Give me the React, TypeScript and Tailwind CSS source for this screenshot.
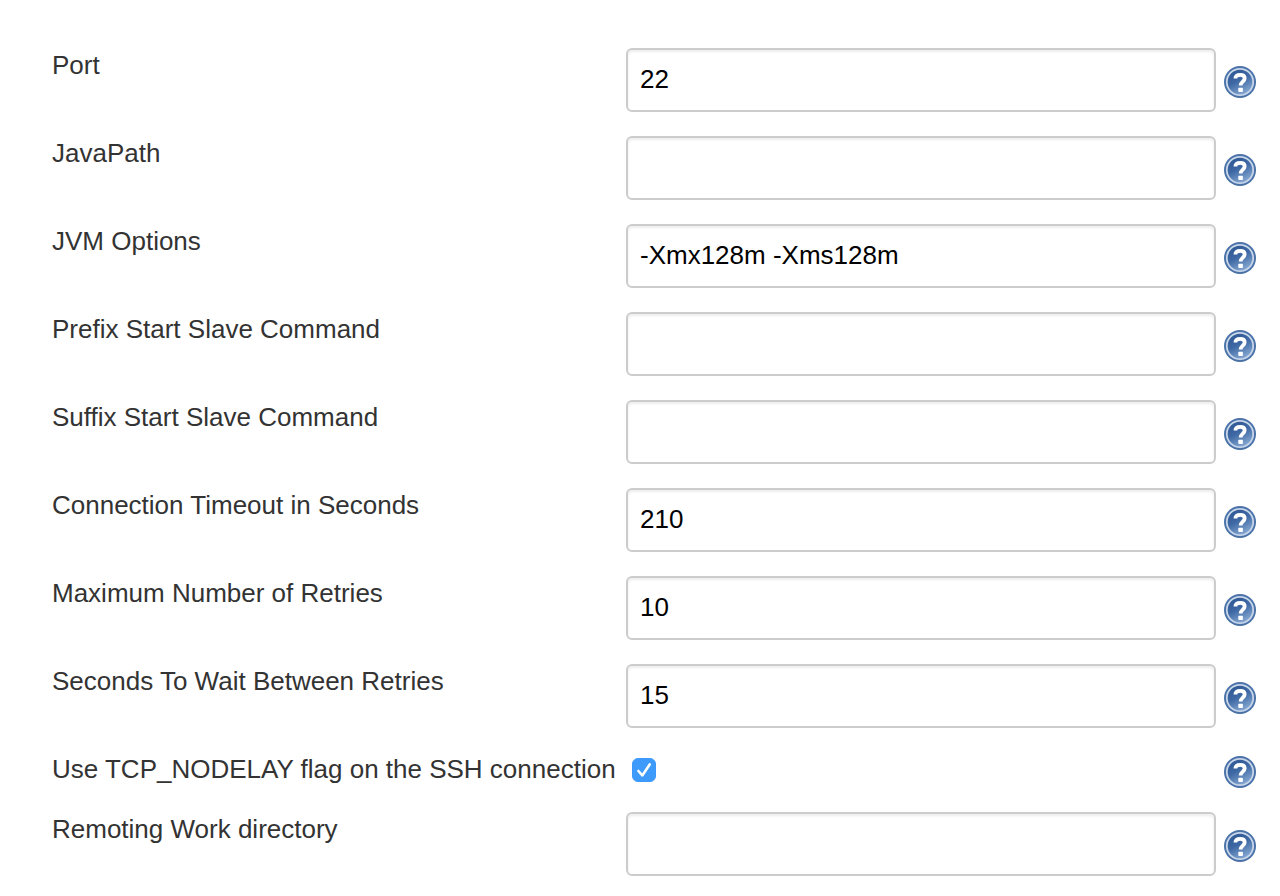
import { useState } from "react";

type Field = {
  id: string;
  label: string;
  kind: "text" | "checkbox";
  value?: string;
};

const fields: Field[] = [
  { id: "port", label: "Port", kind: "text", value: "22" },
  { id: "javaPath", label: "JavaPath", kind: "text" },
  { id: "jvmOptions", label: "JVM Options", kind: "text", value: "-Xmx128m -Xms128m" },
  { id: "prefix", label: "Prefix Start Slave Command", kind: "text" },
  { id: "suffix", label: "Suffix Start Slave Command", kind: "text" },
  { id: "timeout", label: "Connection Timeout in Seconds", kind: "text", value: "210" },
  { id: "retries", label: "Maximum Number of Retries", kind: "text", value: "10" },
  { id: "wait", label: "Seconds To Wait Between Retries", kind: "text", value: "15" },
  { id: "tcpNoDelay", label: "Use TCP_NODELAY flag on the SSH connection", kind: "checkbox" },
  { id: "workDir", label: "Remoting Work directory", kind: "text" },
];

function HelpIcon() {
  return (
    <svg viewBox="0 0 32 32" className="block size-8" aria-hidden="true">
      <defs>
        <linearGradient id="help-fill" x1="0.1" y1="0" x2="0.6" y2="1">
          <stop offset="0" stopColor="#2b5490" />
          <stop offset="0.5" stopColor="#3f69a5" />
          <stop offset="1" stopColor="#86a8d2" />
        </linearGradient>
      </defs>
      <circle cx="16" cy="16" r="16" fill="#4a72a9" />
      <circle cx="16" cy="16" r="13.2" fill="url(#help-fill)" stroke="#c6d5e8" strokeWidth="1.8" />
      <path
        d="M11.4 12.6C11.4 9.6 13.4 8.9 16.2 8.9C19.2 8.9 20.7 10.2 20.7 12.3C20.7 15.7 16.6 15.6 16.6 19.6"
        fill="none"
        stroke="#fff"
        strokeWidth="3.8"
      />
      <rect x="14.3" y="21.8" width="4.6" height="4.2" rx="0.8" fill="#fff" />
    </svg>
  );
}

function Row({ field }: { field: Field }) {
  const [text, setText] = useState(field.value ?? "");
  const [checked, setChecked] = useState(true);
  const isText = field.kind === "text";

  return (
    <div className="grid grid-cols-[574px_minmax(0,1fr)_40px] items-start">
      <label htmlFor={field.id} className="leading-[34px] whitespace-nowrap text-[#333]">
        {field.label}
      </label>
      {isText ? (
        <input
          id={field.id}
          type="text"
          value={text}
          onChange={(e) => setText(e.target.value)}
          className="h-16 w-full min-w-0 rounded-md border-2 border-[#ccc] bg-white px-3 pb-0.5 text-black shadow-[inset_0_2px_3px_rgba(0,0,0,0.075)] outline-none focus:border-[#66afe9]"
        />
      ) : (
        <span className="grid w-fit py-1.5 pl-1.5">
          <input
            id={field.id}
            type="checkbox"
            checked={checked}
            onChange={(e) => setChecked(e.target.checked)}
            className="peer col-start-1 row-start-1 size-6 appearance-none rounded-md border border-[#aaa] bg-white checked:border-[#3b99fc] checked:bg-[#3e9afb]"
          />
          <svg
            viewBox="0 0 24 24"
            aria-hidden="true"
            className="pointer-events-none invisible col-start-1 row-start-1 size-6 peer-checked:visible"
          >
            <path
              d="M6.4 13L10.3 17.4L17.7 6.4"
              fill="none"
              stroke="#fff"
              strokeWidth="2.6"
              strokeLinecap="round"
              strokeLinejoin="round"
            />
          </svg>
        </span>
      )}
      <button
        type="button"
        aria-label={`Help for ${field.label}`}
        className={isText ? "mt-[18px] cursor-pointer justify-self-end" : "mt-1 cursor-pointer justify-self-end"}
      >
        <HelpIcon />
      </button>
    </div>
  );
}

export default function App() {
  return (
    <main className="min-h-screen bg-white font-['Liberation_Sans',Arial,sans-serif] text-[26px]">
      <form className="flex flex-col gap-6 pt-12 pr-6 pb-5 pl-[52px]" onSubmit={(e) => e.preventDefault()}>
        {fields.map((field) => (
          <Row key={field.id} field={field} />
        ))}
      </form>
    </main>
  );
}
